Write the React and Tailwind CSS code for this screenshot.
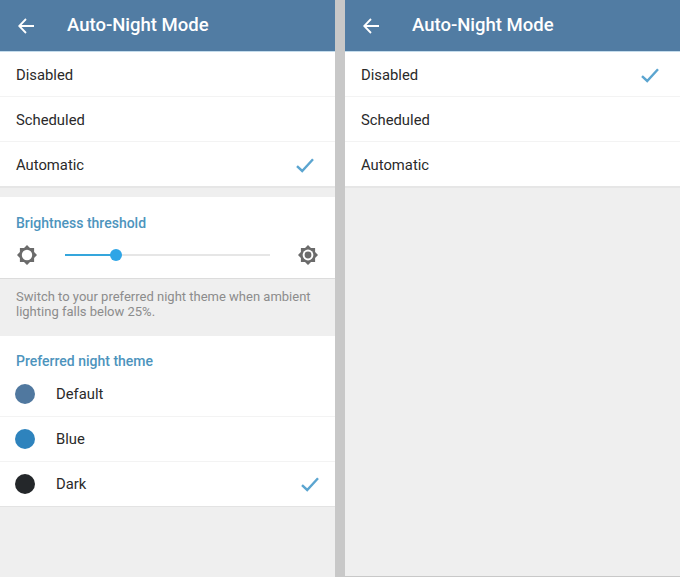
import React from "react";

function BackArrow() {
  return (
    <svg width="16" height="16" viewBox="0 0 16 16" fill="none" stroke="#fff" strokeWidth="1.8">
      <path d="M16 8H1.5M8 1L1.2 8L8 15" />
    </svg>
  );
}

function Check() {
  return (
    <svg width="18" height="15" viewBox="0 0 18 15" fill="none" stroke="#5ba5d0" strokeWidth="2.4">
      <path d="M1 8.2L6.2 13L17 1.2" />
    </svg>
  );
}

const sunPath =
  "M10 0L13 2.9L17.1 2.9L17.1 7L20 10L17.1 13L17.1 17.1L13 17.1L10 20L7 17.1L2.9 17.1L2.9 13L0 10L2.9 7L2.9 2.9L7 2.9Z";

function SunOutline() {
  return (
    <svg width="20" height="20" viewBox="0 0 20 20">
      <path d={sunPath} fill="#6b6b6b" />
      <circle cx="10" cy="10" r="5.2" fill="#fff" />
    </svg>
  );
}

function SunFilled() {
  return (
    <svg width="20" height="20" viewBox="0 0 20 20">
      <path d={sunPath} fill="#6b6b6b" />
      <circle cx="10" cy="10" r="5.4" fill="#fff" />
      <circle cx="10" cy="10" r="3.4" fill="#6b6b6b" />
    </svg>
  );
}

function Header() {
  return (
    <div className="flex h-[52px] items-center border-b border-[#c4dcec] bg-[#517ca3] pl-[18px]">
      <BackArrow />
      <span className="ml-[33px] text-[18.5px] font-medium text-white">Auto-Night Mode</span>
    </div>
  );
}

function Row({ label, checked, last }) {
  return (
    <div
      className={`flex items-center justify-between pt-[2px] pl-4 ${
        last ? "h-[44px]" : "h-[45px] border-b border-[#f3f3f3]"
      }`}
    >
      <span className="text-[14.8px] text-[#2a2a2a]">{label}</span>
      {checked && (
        <span className="mr-[21px]">
          <Check />
        </span>
      )}
    </div>
  );
}

function ThemeRow({ label, color, checked, last }) {
  return (
    <div
      className={`flex items-center justify-between pl-[15px] ${
        last ? "h-[44px]" : "h-[45px] border-b border-[#f3f3f3]"
      }`}
    >
      <div className="flex items-center">
        <div className={`h-5 w-5 rounded-full ${color}`} />
        <span className="ml-[21px] text-[14.8px] text-[#2a2a2a]">{label}</span>
      </div>
      {checked && (
        <span className="mr-4">
          <Check />
        </span>
      )}
    </div>
  );
}

export default function App() {
  return (
    <div
      className="flex h-[577px] w-[680px] gap-[10px] overflow-hidden bg-[#c8c8c8]"
      style={{ fontFamily: "Roboto, sans-serif" }}
    >
      <div className="flex w-[335px] flex-col bg-[#efefef]">
        <Header />
        <div className="border-b-2 border-[#e6e6e6] bg-white">
          <Row label="Disabled" />
          <Row label="Scheduled" />
          <Row label="Automatic" checked last />
        </div>
        <div className="mt-[9px] border-b border-[#dcdcdc] bg-white px-4 pt-[17px]">
          <div className="text-[14px] leading-[18px] font-medium text-[#4d94bd]">Brightness threshold</div>
          <div className="mt-[13px] flex h-[20px] items-center justify-between">
            <div className="ml-px">
              <SunOutline />
            </div>
            <div className="relative mx-[28px] h-[2px] flex-1 bg-[#e6e6e6]">
              <div className="h-full w-[50px] bg-[#35a6dc]" />
              <div className="absolute top-[-5px] left-[45px] h-3 w-3 rounded-full bg-[#2fa5e6]" />
            </div>
            <div className="mr-[1px]">
              <SunFilled />
            </div>
          </div>
          <div className="h-[13px]" />
        </div>
        <div className="h-[57px] pt-[10px] pl-4 text-[13px] leading-[15px] text-[#8c8c8c]">
          Switch to your preferred night theme when ambient
          <br />
          lighting falls below 25%.
        </div>
        <div className="border-b border-[#e3e3e3] bg-white">
          <div className="pt-4 pb-[2px] pl-4 text-[14px] leading-[18px] font-medium text-[#4d94bd]">
            Preferred night theme
          </div>
          <ThemeRow label="Default" color="bg-[#50789f]" />
          <ThemeRow label="Blue" color="bg-[#2e83bd]" />
          <ThemeRow label="Dark" color="bg-[#24272a]" checked last />
        </div>
      </div>
      <div className="flex h-[576px] flex-1 flex-col bg-[#efefef]">
        <Header />
        <div className="border-b-2 border-[#e6e6e6] bg-white">
          <Row label="Disabled" checked />
          <Row label="Scheduled" />
          <Row label="Automatic" last />
        </div>
      </div>
    </div>
  );
}
